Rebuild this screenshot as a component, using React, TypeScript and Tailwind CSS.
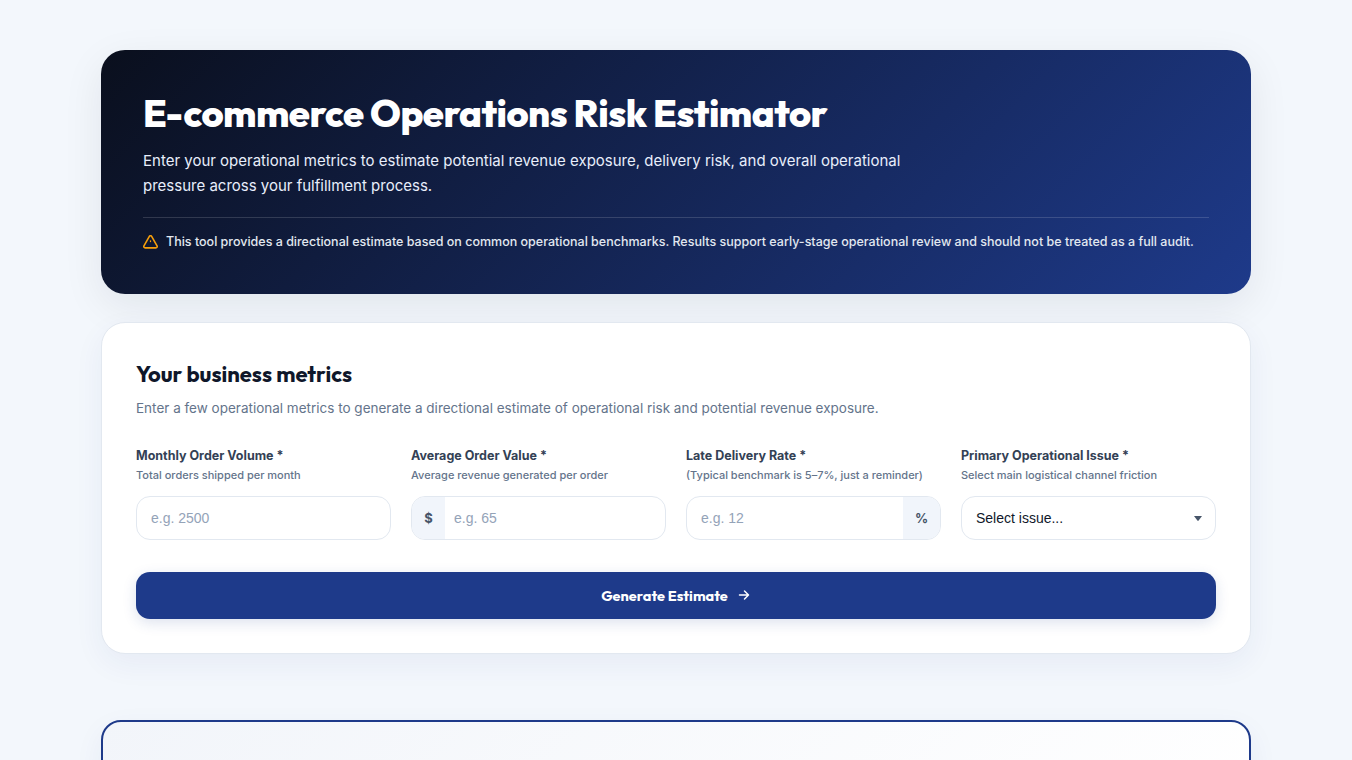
import type { ReactNode } from 'react';

const inputClass =
  "w-full min-w-0 bg-transparent text-[14px] text-slate-900 outline-none placeholder:text-[#94a3b8] font-['Liberation_Sans',sans-serif]";

function Field({ label, hint, children }: { label: string; hint: string; children: ReactNode }) {
  return (
    <div className="flex flex-col">
      <label className="text-[12.5px] leading-5 font-bold text-[#334155]">{label}</label>
      <span className="text-[11px] leading-[18px] font-medium text-[#64748b]">{hint}</span>
      <div className="mt-3 flex h-11 overflow-hidden rounded-[14px] border border-[#e2e8f0] bg-white">
        {children}
      </div>
    </div>
  );
}

export default function App() {
  return (
    <div className="h-[760px] overflow-hidden bg-[#f3f7fc] pt-[50px] font-['Inter',sans-serif]">
      <main className="mx-auto flex w-[1150px] flex-col">
        {/* Hero */}
        <header className="h-[244px] rounded-[24px] bg-[linear-gradient(135deg,#0a0f1d_0%,#1e3a8a_100%)] p-[42px] shadow-[0_12px_40px_rgba(15,23,42,0.08)]">
          <h1 className="font-['Outfit',sans-serif] text-[38px] leading-[42px] font-extrabold tracking-[-0.5px] whitespace-nowrap text-white">
            E-commerce Operations Risk Estimator
          </h1>
          <p className="mt-[14px] w-[780px] text-[15px] leading-[25px] text-[#e8eefb]">
            Enter your operational metrics to estimate potential revenue exposure, delivery risk, and overall operational
            pressure across your fulfillment process.
          </p>
          <div className="mt-[19px] flex items-center gap-2 border-t border-white/15 pt-[14px]">
            <svg className="size-[15px] shrink-0" viewBox="0 0 15 15" fill="none" stroke="#f59e0b" strokeLinecap="round" strokeLinejoin="round">
              <path strokeWidth="1.6" d="M6.35 1.4.95 10.9a1.3 1.3 0 0 0 1.15 1.95h10.8a1.3 1.3 0 0 0 1.15-1.95L8.65 1.4a1.33 1.33 0 0 0-2.3 0Z" />
              <path strokeWidth="1.3" d="M7.5 5.8v.8" />
            </svg>
            <p className="text-[12.5px] leading-5 font-medium whitespace-nowrap text-[#e2e8f0]">
              This tool provides a directional estimate based on common operational benchmarks. Results support early-stage operational review and should not be treated as a full audit.
            </p>
          </div>
        </header>

        {/* Metrics form */}
        <section className="mt-7 h-[332px] rounded-[24px] border border-[#e2e8f0] bg-white px-[34px] pt-[34px] shadow-[0_10px_30px_rgba(30,58,138,0.06)]">
          <h2 className="font-['Outfit',sans-serif] text-[22px] leading-[34px] font-bold text-[#0f172a]">
            Your business metrics
          </h2>
          <p className="mt-[6px] text-[13.5px] leading-[22px] text-[#64748b]">
            Enter a few operational metrics to generate a directional estimate of operational risk and potential revenue exposure.
          </p>
          <form onSubmit={(e) => e.preventDefault()}>
            <div className="mt-[27px] grid grid-cols-4 gap-5">
              <Field label="Monthly Order Volume *" hint="Total orders shipped per month">
                <input className={`${inputClass} px-[14px]`} placeholder="e.g. 2500" />
              </Field>
              <Field label="Average Order Value *" hint="Average revenue generated per order">
                <span className="flex w-[33px] shrink-0 items-center justify-center bg-[#f1f5fb] pt-px text-[13px] font-bold text-[#475569]">$</span>
                <input className={`${inputClass} px-[9px]`} placeholder="e.g. 65" />
              </Field>
              <Field label="Late Delivery Rate *" hint="(Typical benchmark is 5–7%, just a reminder)">
                <input className={`${inputClass} px-[14px]`} placeholder="e.g. 12" />
                <span className="flex w-[37px] shrink-0 items-center justify-center bg-[#f1f5fb] pt-px text-[13px] font-bold text-[#475569]">%</span>
              </Field>
              <Field label="Primary Operational Issue *" hint="Select main logistical channel friction">
                <button type="button" className="flex w-full items-center justify-between pr-[13px] pl-[14px] font-['Liberation_Sans',sans-serif] text-[14px] text-[#0f172a]">
                  Select issue...
                  <svg className="h-[5px] w-[8px]" viewBox="0 0 8 5" fill="#475569">
                    <path d="M0 0h8L4.6 4.6a.8.8 0 0 1-1.2 0Z" />
                  </svg>
                </button>
              </Field>
            </div>
            <button type="submit" className="mt-8 flex h-[47px] w-full items-center justify-center gap-[10px] rounded-[14px] bg-[#1e3a8a] pr-px font-['Outfit',sans-serif] text-[14.5px] font-bold text-white shadow-[0_4px_14px_rgba(30,58,138,0.15)]">
              Generate Estimate
              <svg className="-mt-px size-3" viewBox="0 0 12 12" fill="none" stroke="currentColor" strokeWidth="1.5" strokeLinecap="round" strokeLinejoin="round">
                <path d="M1.5 6h9M6.5 2l4 4-4 4" />
              </svg>
            </button>
          </form>
        </section>

        {/* Results panel */}
        <section className="mt-[66px] h-[400px] rounded-[20px] border-2 border-[#1e3a8a] bg-[linear-gradient(135deg,#f2f5fa_0%,#ffffff_82%)] shadow-[0_10px_30px_rgba(30,58,138,0.06)]" />
      </main>
    </div>
  );
}
